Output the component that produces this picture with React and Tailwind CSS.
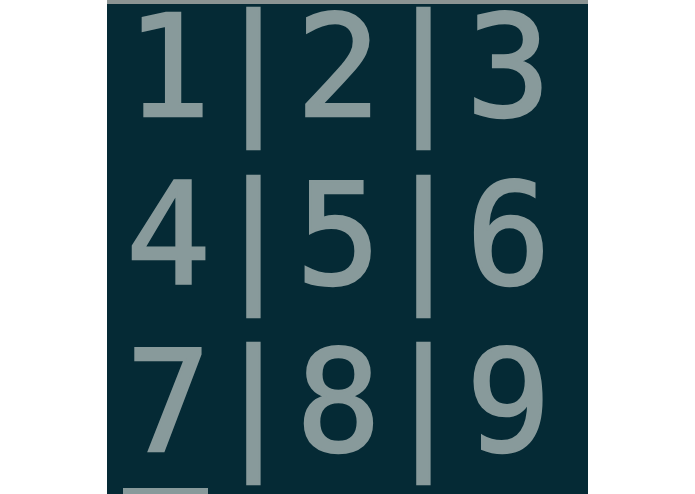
import React from 'react';

const rows = [
  ['1', '2', '3'],
  ['4', '5', '6'],
  ['7', '8', '9'],
];

const Cell = ({ ch, cursor }) => (
  <span className="relative inline-block w-[85px] text-center">
    {ch}
    {cursor && <span className="absolute left-[-3px] bottom-[-7px] h-[6px] w-[85px] bg-[#889a9b]" />}
  </span>
);

const App = () => {
  return (
    <div className="w-[695px] h-[494px] bg-white overflow-hidden">
      <div className="ml-[107px] w-[481px] h-[494px] bg-[#052a35] border-t-4 border-[#8c9493] overflow-hidden">
        <div
          className="mt-[-20px] pl-[19px] text-[141px] leading-[167.5px] text-[#889a9b] whitespace-pre [-webkit-text-stroke:2.5px_#889a9b]"
          style={{ fontFamily: '"DejaVu Sans Mono", monospace' }}
        >
          {rows.map((row, i) => (
            <div key={i} className="flex">
              <Cell ch={row[0]} cursor={i === 2} />
              <Cell ch="|" />
              <Cell ch={row[1]} />
              <Cell ch="|" />
              <Cell ch={row[2]} />
            </div>
          ))}
        </div>
      </div>
    </div>
  );
};

export default App;
